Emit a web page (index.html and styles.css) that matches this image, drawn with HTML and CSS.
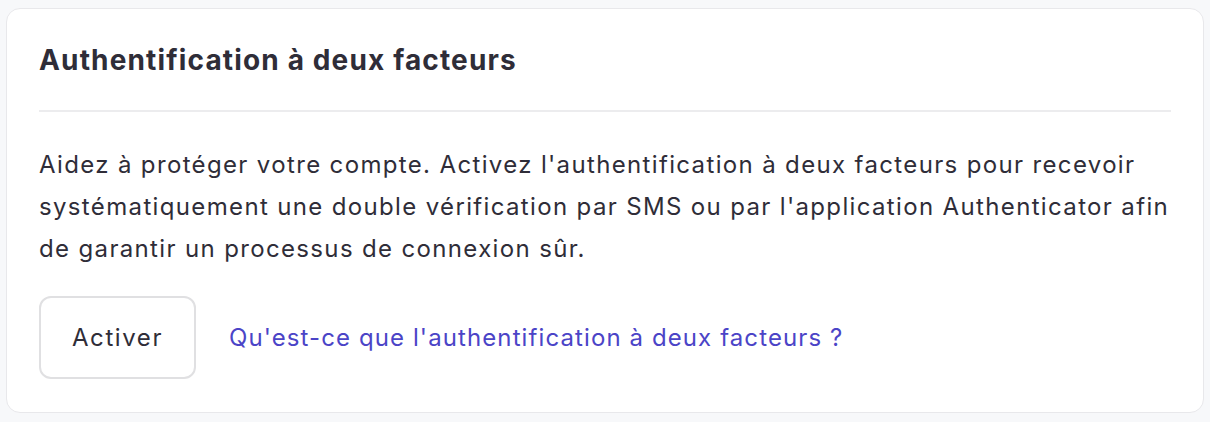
FILE: index.html
```html
<!DOCTYPE html>
<html lang="fr">
<head>
  <meta charset="UTF-8">
  <title>Authentification à deux facteurs</title>
  <link rel="stylesheet" href="styles.css">
</head>
<body>

<div class="card">
  <h2 class="card-title">Authentification à deux facteurs</h2>
  <p class="card-text">Aidez à protéger votre compte. Activez l'authentification à deux facteurs pour recevoir systématiquement une double vérification par SMS ou par l'application Authenticator afin de garantir un processus de connexion sûr.</p>
  <div class="actions">
    <button class="btn">Activer</button>
    <a class="link" href="#">Qu'est-ce que l'authentification à deux facteurs ?</a>
  </div>
</div>

</body>
</html>
```

FILE: styles.css
```css
body {
  margin: 0;
  padding: 8px 6px;
  background-color: #f7f8fa;
  font-family: 'Inter', 'Noto Sans', sans-serif;
  color: #2f2d38;
}
.card {
  background-color: #fff;
  border: 1px solid #e8e8eb;
  border-radius: 14px;
  padding: 0 32px 33px;
}
.card-title {
  margin: 0;
  padding: 34px 0 33px;
  font-size: 28px;
  font-weight: 700;
  line-height: 34px;
  letter-spacing: 1.15px;
  border-bottom: 2px solid #ececee;
}
.card-text {
  margin: 32px 0 26px;
  font-size: 24px;
  line-height: 42px;
  letter-spacing: 1.35px;
}
.actions {
  display: flex;
  align-items: center;
  gap: 33px;
}
.btn {
  width: 157px;
  height: 83px;
  background-color: #fff;
  border: 2px solid #e0e0e2;
  border-radius: 12px;
  font-family: inherit;
  font-size: 24px;
  letter-spacing: 1.6px;
  color: #2f2d38;
  cursor: pointer;
}
.link {
  color: #4b44c7;
  font-size: 24px;
  letter-spacing: 1.1px;
  text-decoration: none;
}
```
